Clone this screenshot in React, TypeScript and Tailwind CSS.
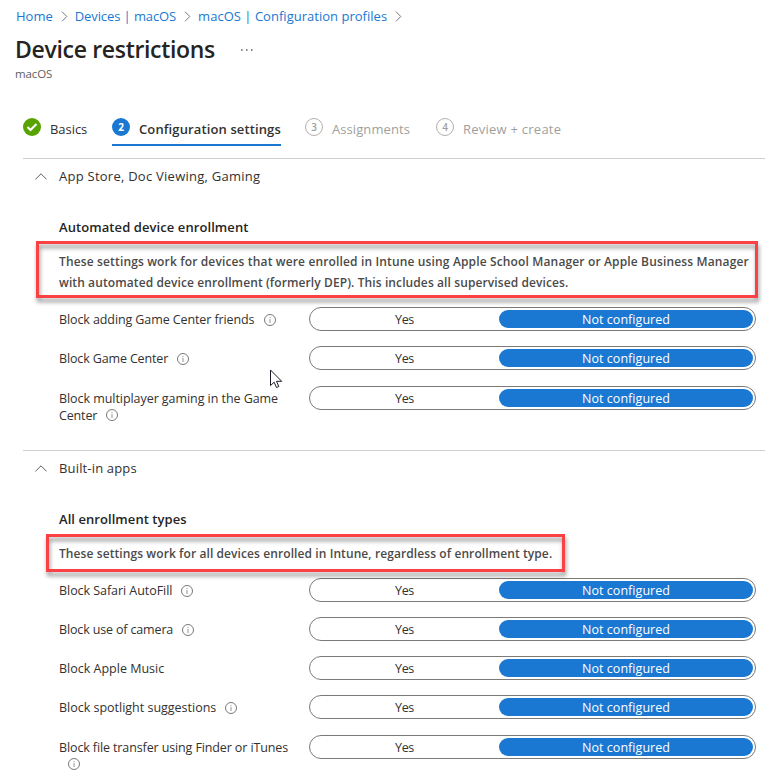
import type { ReactNode } from 'react';

function Crumb({ children, className }: { children: ReactNode; className: string }) {
  return (
    <>
      <a className={`whitespace-nowrap text-[#1a78d2] ${className}`}>{children}</a>
      <svg width="7" height="11" viewBox="0 0 7 11" className="mr-[7px] ml-[8px] shrink-0" fill="none" stroke="#777" strokeWidth="1">
        <path d="M1 .7 5.8 5.5 1 10.3" />
      </svg>
    </>
  );
}

function InfoIcon({ className }: { className: string }) {
  return (
    <svg width="12" height="12" viewBox="0 0 12 12" className={`inline-block align-top ${className}`} fill="none" stroke="#6b6a69" strokeWidth="0.9">
      <circle cx="6" cy="6" r="5.5" />
      <path d="M6 5v4M6 3v1.1" stroke="#8a8988" />
    </svg>
  );
}

function Toggle() {
  return (
    <div className="flex h-6 w-[447px] shrink-0 items-center rounded-full border border-[#7b7a79] pr-[2px]">
      <div className="w-[189px] pt-px text-center leading-[19px] tracking-[-0.35px]">Yes</div>
      <div className="h-[18px] flex-1 rounded-full bg-[#1a78d2] text-center leading-[20px] tracking-[0.05px] text-white">Not configured</div>
    </div>
  );
}

function Row({ children, className }: { children: ReactNode; className: string }) {
  return (
    <div className={`flex items-start pl-[36px] ${className}`}>
      <div className="w-[250px] shrink-0 pt-[4px] leading-[17px] whitespace-nowrap">{children}</div>
      <Toggle />
    </div>
  );
}

function SectionHeader({ children, className }: { children: ReactNode; className: string }) {
  return (
    <div className="flex h-[36px] items-center border-t border-[#d2d0ce] pl-[12px] text-[13px]">
      <svg width="12" height="7" viewBox="0 0 12 7" className="mr-[12px]" fill="none" stroke="#605e5c" strokeWidth="1">
        <path d="M.4 6.4 6 .8l5.6 5.600" />
      </svg>
      <span className={`pt-px ${className}`}>{children}</span>
    </div>
  );
}

function Highlight({ className }: { className: string }) {
  return (
    <div className={`pointer-events-none absolute border-[3px] border-[#fc4144] drop-shadow-[1px_4px_2px_rgba(0,0,0,0.42)] ${className}`} />
  );
}

export default function App() {
  return (
    <div className="relative h-[774px] w-[767px] overflow-hidden bg-white font-['Open_Sans','Noto_Sans',sans-serif] text-[12.5px] text-[#323130]">
      <nav className="flex h-[32px] items-center pt-px pl-[16px] text-[13px]">
        <Crumb className="tracking-[0px]">Home</Crumb>
        <Crumb className="tracking-[-0.1px]">Devices | macOS</Crumb>
        <Crumb className="tracking-[0.02px]">macOS | Configuration profiles</Crumb>
      </nav>
      <header className="h-[77px] pl-[15px]">
        <div className="flex h-[34px] items-center">
          <h1 className="text-[23px] font-semibold tracking-[-0.32px] text-[#252423]">Device restrictions</h1>
          <svg width="12" height="2" viewBox="0 0 12 2" className="mt-[2px] ml-[26px]" fill="#605e5c">
            <path d="M0 .3h1.500v1.500H0zM5 .3h1.500v1.500H5zM10 .3h1.500v1.500H10z" />
          </svg>
        </div>
        <div className="text-[11.5px] leading-[16px] tracking-[-0.1px] text-[#605e5c]">macOS</div>
      </header>
      <div className="flex h-[49px] pl-[23px] text-[13px]">
        <div className="flex h-[37px] w-[89px]">
          <svg width="18" height="18" viewBox="0 0 18 18" className="mt-[9px]">
            <circle cx="9" cy="9" r="9" fill="#57a300" />
            <path d="m4.500 9 3 3 6-6" fill="none" stroke="#fff" strokeWidth="2.2" />
          </svg>
          <span className="ml-[9px] leading-[41px] tracking-[-0.05px]">Basics</span>
        </div>
        <div className="flex h-[37px] w-[169px] border-b-2 border-[#1a78d2]">
          <span className="mt-[9px] size-[18px] shrink-0 rounded-full bg-[#1a78d2] text-center text-[10px] leading-[18px] font-bold text-white">2</span>
          <span className="ml-[9px] leading-[41px] font-semibold tracking-[0.12px] whitespace-nowrap">Configuration settings</span>
        </div>
        <div className="ml-[24px] flex w-[131px] text-[#a19f9d]">
          <span className="mt-[9px] size-[18px] shrink-0 rounded-full border border-[#b3b0ad] text-center text-[10px] leading-[16px] font-semibold">3</span>
          <span className="ml-[9px] leading-[41px] tracking-[0.08px]">Assignments</span>
        </div>
        <div className="flex text-[#a19f9d]">
          <span className="mt-[9px] size-[18px] shrink-0 rounded-full border border-[#b3b0ad] text-center text-[10px] leading-[16px] font-semibold">4</span>
          <span className="ml-[9px] leading-[41px] tracking-[0.24px] whitespace-nowrap">Review + create</span>
        </div>
      </div>
      <main className="w-[765px] pl-[23px]">
        <section className="h-[292px]">
          <SectionHeader className="tracking-[0.25px]">App Store, Doc Viewing, Gaming</SectionHeader>
          <h2 className="mt-[23px] h-[20px] pl-[36px] text-[13px] leading-[20px] font-semibold tracking-[0.08px] text-[#252423]">Automated device enrollment</h2>
          <div className="relative mt-[14px] h-[56px] pl-[36px] text-[12px] leading-[21px] font-semibold whitespace-nowrap text-[#4b4a49]">
            <p className="tracking-[0.145px]">These settings work for devices that were enrolled in Intune using Apple School Manager or Apple Business Manager</p>
            <p className="tracking-[0.1px]">with automated device enrollment (formerly DEP). This includes all supervised devices.</p>
            <Highlight className="top-[-10px] left-[13px] h-[57px] w-[722px]" />
          </div>
          <Row className="h-[39px]">
            <span className="tracking-[-0.1px]">Block adding Game Center friends</span>
            <InfoIcon className="mt-[3px] ml-[10px]" />
          </Row>
          <Row className="h-[40px]">
            <span className="tracking-[-0.14px]">Block Game Center</span>
            <InfoIcon className="mt-[3px] ml-[9px]" />
          </Row>
          <Row className="h-[40px]">
            <span className="tracking-[-0.06px]">Block multiplayer gaming in the Game</span>
            <br />
            <span className="tracking-[-0.15px]">Center</span>
            <InfoIcon className="mt-[2px] ml-[9px]" />
          </Row>
        </section>
        <section>
          <SectionHeader className="tracking-[0.16px]">Built-in apps</SectionHeader>
          <h2 className="mt-[23px] h-[20px] pl-[36px] text-[13px] leading-[20px] font-semibold tracking-[0.06px] text-[#252423]">All enrollment types</h2>
          <div className="relative mt-[14px] h-[35px] pl-[36px] text-[12px] leading-[21px] font-semibold whitespace-nowrap text-[#4b4a49]">
            <p className="tracking-[0.09px]">These settings work for all devices enrolled in Intune, regardless of enrollment type.</p>
            <Highlight className="top-[-9px] left-[23px] h-[38px] w-[519px]" />
          </div>
          <Row className="h-[39px]">
            <span className="tracking-[-0.05px]">Block Safari AutoFill</span>
            <InfoIcon className="mt-[3px] ml-[9px]" />
          </Row>
          <Row className="h-[39px]">
            <span className="tracking-[-0.15px]">Block use of camera</span>
            <InfoIcon className="mt-[3px] ml-[9px]" />
          </Row>
          <Row className="h-[39px]">
            <span className="tracking-[0px]">Block Apple Music</span>
          </Row>
          <Row className="h-[40px]">
            <span className="tracking-[-0.01px]">Block spotlight suggestions</span>
            <InfoIcon className="mt-[3px] ml-[9px]" />
          </Row>
          <Row className="h-[39px]">
            <span className="tracking-[-0.12px]">Block file transfer using Finder or iTunes</span>
            <br />
            <InfoIcon className="mt-[2px] ml-[9px]" />
          </Row>
        </section>
      </main>
      <svg width="13" height="20" viewBox="0 0 13 20" className="absolute top-[369px] left-[270px]" fill="#fff" stroke="#1b1a2b" strokeWidth="1">
        <path d="M.5 1v15.600l3.600-3.400 2.400 5.300 2.300-1L6.500 12.300h5.200z" />
      </svg>
    </div>
  );
}
